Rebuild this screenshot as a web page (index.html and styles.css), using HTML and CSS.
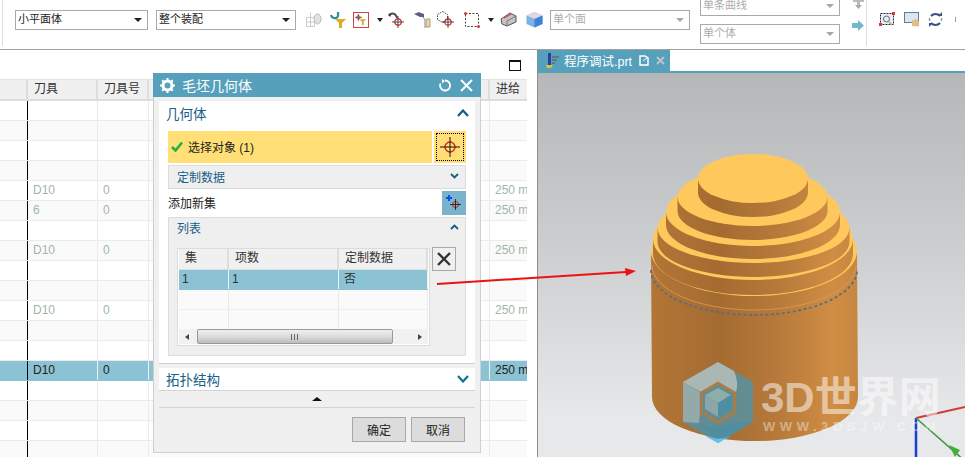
FILE: index.html
```html
<!DOCTYPE html>
<html lang="zh">
<head>
<meta charset="utf-8">
<title>毛坯几何体</title>
<link rel="stylesheet" href="styles.css">
</head>
<body>
<div class="app">
  <header class="toolbar">
    <div class="tb-sep first"></div>
    <div class="combo c1"><span>小平面体</span><i class="caret"></i></div>
    <div class="combo c2"><span>整个装配</span><i class="caret"></i></div>
    <div class="tb-icons">
      <svg width="17" height="17" viewBox="0 0 17 17"><path d="M1.500 6.500h8v9h-8zM5.500 1.500v14M1.500 11h8" fill="none" stroke="#c8cccc"/><ellipse cx="12.500" cy="8" rx="3.500" ry="5" fill="#dfe3e6" stroke="#bbb"/></svg>
      <svg width="16" height="17" viewBox="0 0 16 17"><path d="M1 4c1 4 6 4 7 1V1" fill="none" stroke="#2d8f96" stroke-width="2.200"/><path d="M5 8h11l-4 4v5h-3v-5z" fill="#e0a92c"/></svg>
      <svg class="boxed" width="16" height="16" viewBox="0 0 16 16"><circle cx="5" cy="5" r="2" fill="none" stroke="#c33"/><path d="M5 1v8M1 5h8" stroke="#333" stroke-width=".8"/><path d="M6 7h8l-3 3v4h-2v-4z" fill="#e0a92c"/></svg>
      <i class="mini-caret"></i>
      <svg width="17" height="17" viewBox="0 0 17 17"><path d="M1 5c2-4 7-3 8 2" fill="none" stroke="#445" stroke-width="1.800"/><path d="M0 3l3-1 0 4z" fill="#445"/><circle cx="10" cy="11" r="3.200" fill="none" stroke="#d22" stroke-width="1.200"/><path d="M10 5v12M4 11h12" stroke="#222" stroke-width=".8"/></svg>
      <svg width="17" height="17" viewBox="0 0 17 17"><path d="M0 3l5-2 2 1 3 1v3H6z" fill="#5a6078"/><path d="M9 6l2 3v8" stroke="#7a8fb0" fill="none"/><path d="M12 8h4v8h-4z" fill="#e8d8a8" stroke="#b0a078"/></svg>
      <svg width="17" height="17" viewBox="0 0 17 17"><path d="M5.500 .5l5 3v5l-5 3-5-3v-5z" fill="none" stroke="#444" stroke-dasharray="1.500 1"/><circle cx="11" cy="11" r="3.200" fill="none" stroke="#d22" stroke-width="1.200"/><path d="M11 5v12M5 11h12" stroke="#222" stroke-width=".8"/></svg>
      <svg width="16" height="16" viewBox="0 0 16 16"><path d="M1.500 1.500h13v13h-13z" fill="none" stroke="#444" stroke-dasharray="2 1.500"/><circle cx="1.500" cy="1.500" r="1.500" fill="#d33"/><circle cx="14.500" cy="14.500" r="1.500" fill="#d33"/></svg>
      <i class="mini-caret"></i>
      <svg width="17" height="15" viewBox="0 0 17 15"><path d="M1 7l9-6 6 3v6l-9 4-5-2z" fill="#c4c4c4" stroke="#555"/><path d="M4 6l7-4" stroke="#d55" stroke-width="1.500"/><path d="M7 14V9l9-5" fill="none" stroke="#777"/></svg>
      <svg width="17" height="17" viewBox="0 0 17 17"><path d="M8.500 1l8 3.500v8.500l-8 3.500-8-3.500V4.500z" fill="#79b4e4"/><path d="M.5 4.500L8.500 8l8-3.500-8-3.500z" fill="#e6d5e0"/><path d="M8.500 8v8.500l8-3.500V4.500z" fill="#3d82dc"/></svg>
    </div>
    <div class="combo off c3"><span>单个面</span><i class="caret"></i></div>
    <div class="stack">
      <div class="combo off c4"><span>单条曲线</span><i class="caret"></i></div>
      <div class="combo off c4"><span>单个体</span><i class="caret"></i></div>
    </div>
    <div class="arrows">
      <svg width="13" height="10" viewBox="0 0 13 10"><path d="M1 0h11v2H1zM5 0h3v6H5z" fill="#bbb"/><path d="M3 5h7l-3.500 4z" fill="#aaa"/></svg>
      <svg width="12" height="11" viewBox="0 0 12 11"><path d="M0 3h6V0l6 5.500L6 11V8H0z" fill="#6fb9cf"/></svg>
    </div>
    <div class="tb-sep"></div>
    <div class="tb-icons right">
      <svg width="16" height="15" viewBox="0 0 16 15"><rect x="1.500" y="1.500" width="13" height="11" fill="#e6eef6" stroke="#224" stroke-dasharray="2 1"/><circle cx="7.500" cy="7" r="3" fill="none" stroke="#667"/><path d="M13 0h3v3h-3zM0 11h3v3H0z" fill="#d33"/><path d="M10 10l3 3" stroke="#c8a860" stroke-width="1.500"/></svg>
      <svg width="16" height="15" viewBox="0 0 16 15"><rect x=".5" y=".5" width="14" height="10" fill="#dbe6f0" stroke="#6a7a90"/><path d="M8 14V8l2 .5 1-2 4 3v5z" fill="#e2bb85"/></svg>
      <svg width="15" height="15" viewBox="0 0 15 15"><path d="M3 4a6 6 0 0 1 9 0M12 11a6 6 0 0 1-9 0" fill="none" stroke="#36527e" stroke-width="2"/><path d="M10 4h4V0zM5 11H1v4z" fill="#36527e"/><path d="M1.500 6v3M13.500 6v3" stroke="#8aa0c0" stroke-width="1.500"/></svg>
      <i class="edge-mark"></i>
    </div>
  </header>

  <main class="workspace">
    <section class="left-pane">
      <div class="pane-top"><i class="maximize"></i></div>
      <div class="table">
        <div class="row head"><div class="c a"></div><div class="c b">刀具</div><div class="c d">刀具号</div><div class="c e"></div><div class="c f">进给</div></div>
        <div class="row"><div class="c a"></div><div class="c b"></div><div class="c d"></div><div class="c e"></div><div class="c f"></div></div>
        <div class="row"><div class="c a"></div><div class="c b"></div><div class="c d"></div><div class="c e"></div><div class="c f"></div></div>
        <div class="row"><div class="c a"></div><div class="c b"></div><div class="c d"></div><div class="c e"></div><div class="c f"></div></div>
        <div class="row"><div class="c a"></div><div class="c b"></div><div class="c d"></div><div class="c e"></div><div class="c f"></div></div>
        <div class="row dim"><div class="c a"></div><div class="c b">D10</div><div class="c d">0</div><div class="c e"></div><div class="c f">250 mm</div></div>
        <div class="row dim"><div class="c a"></div><div class="c b">6</div><div class="c d">0</div><div class="c e"></div><div class="c f">250 mm</div></div>
        <div class="row"><div class="c a"></div><div class="c b"></div><div class="c d"></div><div class="c e"></div><div class="c f"></div></div>
        <div class="row dim"><div class="c a"></div><div class="c b">D10</div><div class="c d">0</div><div class="c e"></div><div class="c f">250 mm</div></div>
        <div class="row"><div class="c a"></div><div class="c b"></div><div class="c d"></div><div class="c e"></div><div class="c f"></div></div>
        <div class="row"><div class="c a"></div><div class="c b"></div><div class="c d"></div><div class="c e"></div><div class="c f"></div></div>
        <div class="row dim"><div class="c a"></div><div class="c b">D10</div><div class="c d">0</div><div class="c e"></div><div class="c f">250 mm</div></div>
        <div class="row"><div class="c a"></div><div class="c b"></div><div class="c d"></div><div class="c e"></div><div class="c f"></div></div>
        <div class="row"><div class="c a"></div><div class="c b"></div><div class="c d"></div><div class="c e"></div><div class="c f"></div></div>
        <div class="row sel"><div class="c a"></div><div class="c b">D10</div><div class="c d">0</div><div class="c e"></div><div class="c f">250 mm</div></div>
        <div class="row"><div class="c a"></div><div class="c b"></div><div class="c d"></div><div class="c e"></div><div class="c f"></div></div>
        <div class="row"><div class="c a"></div><div class="c b"></div><div class="c d"></div><div class="c e"></div><div class="c f"></div></div>
        <div class="row"><div class="c a"></div><div class="c b"></div><div class="c d"></div><div class="c e"></div><div class="c f"></div></div>
        <div class="row"><div class="c a"></div><div class="c b"></div><div class="c d"></div><div class="c e"></div><div class="c f"></div></div>
      </div>
    </section>

    <section class="view-pane">
      <div class="tabbar">
        <div class="tab">
          <svg width="14" height="16" viewBox="0 0 14 16"><path d="M3 0h3v12H3z" fill="#2c3f9c"/><path d="M7 4h7M7 7h5M7 10h3" stroke="#555" stroke-width="1"/><path d="M1 12h7l-2 3H2z" fill="#d8c23a"/></svg>
          <span class="tab-name">程序调试.prt</span>
          <svg class="tab-edit" width="10" height="11" viewBox="0 0 10 11"><path d="M1 1h5l3 2v7H1z" fill="none" stroke="#fff" stroke-width="1.500"/><path d="M4 6l5-4" stroke="#fff"/></svg>
          <svg width="9" height="9" viewBox="0 0 9 9"><path d="M1 1l7 7M8 1L1 8" stroke="#b8c4ca" stroke-width="2"/></svg>
        </div>
      </div>
      <div class="viewport">
        <svg class="model" width="427" height="384" viewBox="538 73 427 384">
          <defs>
            <linearGradient id="wall" gradientUnits="userSpaceOnUse" x1="651" y1="0" x2="858" y2="0">
              <stop offset="0" stop-color="#b27636"/>
              <stop offset=".33" stop-color="#a46b31"/>
              <stop offset=".6" stop-color="#b6793a"/>
              <stop offset=".88" stop-color="#d08d44"/>
              <stop offset="1" stop-color="#c68640"/>
            </linearGradient>
          </defs>
          <path d="M651 251 L652 397 A103 44 0 0 0 858 397 L857 251 Z" fill="url(#wall)"/>
          <path d="M652 265 A102 45 0 0 0 856 265" fill="none" stroke="#df9c4e" stroke-width=".8"/>
          <path d="M651 270 A103 45 0 0 0 857 270" fill="none" stroke="#5d6c7e" stroke-width="1.800" stroke-dasharray="3 2.500"/>
          <ellipse cx="754" cy="251" rx="103" ry="45" fill="#ffc85c"/>
          <path d="M653 239 v15 a100 41 0 0 0 200 0 v-15 z" fill="url(#wall)"/>
          <ellipse cx="753" cy="239" rx="100" ry="41" fill="#ffc85c"/>
          <path d="M657.500 228 v14 a96 35 0 0 0 192 0 v-14 z" fill="url(#wall)"/>
          <ellipse cx="753.500" cy="228" rx="96" ry="35" fill="#ffc85c"/>
          <path d="M666 212 v13 a87 34 0 0 0 174 0 v-13 z" fill="url(#wall)"/>
          <ellipse cx="753" cy="212" rx="87" ry="34" fill="#ffc85c"/>
          <path d="M677.500 197 v14 a75 29 0 0 0 150 0 v-14 z" fill="url(#wall)"/>
          <ellipse cx="752.500" cy="197" rx="75" ry="29" fill="#ffc85c"/>
          <path d="M698 178.500 v14 a55 24.500 0 0 0 110 0 v-14 z" fill="url(#wall)"/>
          <ellipse cx="753" cy="178.500" rx="55" ry="24.500" fill="#ffc85c"/>

          <g class="axes">
            <path d="M916 418 L965 407" stroke="#cf3b3b" stroke-width="2"/>
            <path d="M916 418 V457" stroke="#1a3fd0" stroke-width="2.500"/>
            <path d="M916 418 L965 461" stroke="#3f9a3f" stroke-width="1.600"/>
            <path d="M949 445 L960 450 L955 457 Z" fill="#3fae3f"/>
          </g>

          <g class="logo">
            <path d="M718 362 L753 382 V422 L718 443 L683 422 V382 Z" fill="#4f95ad" opacity=".78"/>
            <path d="M718 362 L734 371 Q739 382 736 392 L718 382 L701 392 L683 382 Z" fill="#d8d6cc" opacity=".6"/>
            <path d="M683 382 L700 392 V412 L699 423 L683 422 Z" fill="#c4c8c2" opacity=".5"/>
            <path d="M699 423 Q715 431 735 422 L753 422 L718 443 Z" fill="#3f90ac" opacity=".55"/>
            <path d="M718 443 L705 436 Q718 442 731 436 Z" fill="#62c4f0"/>
            <path d="M718 383 L735 393 V412 L718 422 L701 412 V393 Z" fill="none" stroke="#b47a3c" stroke-width="2.500"/>
            <path d="M718 388 L731 395 L718 403 L705 395 Z" fill="#8fadab"/>
            <path d="M705 395 L718 403 V417 L705 409 Z" fill="#8ba6a6"/>
            <path d="M731 395 L718 403 V417 L731 409 Z" fill="#4f8ea2"/>
            <text class="wm-big" x="761" y="412">3D世界网</text>
            <text class="wm-small" x="763" y="431">WWW.3DSJW.COM</text>
          </g>
        </svg>
      </div>
    </section>
  </main>

  <aside class="dialog">
    <div class="dlg-title">
      <svg width="15" height="15" viewBox="0 0 15 15"><circle cx="7.500" cy="7.500" r="4.500" fill="none" stroke="#fff" stroke-width="3"/><path d="M7.500 0v3M7.500 12v3M0 7.500h3M12 7.500h3M2.200 2.200l2 2M10.800 10.800l2 2M12.800 2.200l-2 2M4.200 10.800l-2 2" stroke="#fff" stroke-width="2"/></svg>
      <span class="dlg-name">毛坯几何体</span>
      <svg class="reset" width="13" height="13" viewBox="0 0 13 13"><path d="M6 1.500a5 5 0 1 1-4.500 3" fill="none" stroke="#fff" stroke-width="1.800"/><path d="M3 0l3 2-3 2.500z" fill="#fff"/></svg>
      <svg width="13" height="13" viewBox="0 0 13 13"><path d="M1 1l11 11M12 1L1 12" stroke="#fff" stroke-width="2"/></svg>
    </div>
    <div class="dlg-body">
      <div class="panel">
        <div class="sec-head"><span>几何体</span><svg class="chev" width="12" height="8" viewBox="0 0 12 8"><path d="M1 7l5-5.500L11 7" fill="none" stroke="#0f5f80" stroke-width="2.200"/></svg></div>
        <div class="pick-row">
          <div class="pick-label">
            <svg width="12" height="11" viewBox="0 0 12 11"><path d="M1 6l3.500 3.500L11 1.500" fill="none" stroke="#1fb43a" stroke-width="2.600"/></svg>
            <span>选择对象 (1)</span>
          </div>
          <div class="pick-btn"><div class="focus">
            <svg width="20" height="20" viewBox="0 0 20 20"><circle cx="10" cy="10" r="5" fill="none" stroke="#e01b1b" stroke-width="1.300"/><path d="M10 0v20M0 10h20" stroke="#111" stroke-width="1"/></svg>
          </div></div>
        </div>
        <div class="sub-head"><span>定制数据</span><svg width="9" height="6" viewBox="0 0 9 6"><path d="M1 1l3.500 3.500L8 1" fill="none" stroke="#0f5f80" stroke-width="1.800"/></svg></div>
        <div class="add-row">
          <span>添加新集</span>
          <div class="add-btn"><svg width="16" height="16" viewBox="0 0 16 16"><path d="M3 0v6M0 3h6" stroke="#0a54e8" stroke-width="2"/><circle cx="9.500" cy="9.500" r="3" fill="none" stroke="#d01818"/><path d="M9.500 4v11M4 9.500h11" stroke="#111" stroke-width=".8"/></svg></div>
        </div>
        <div class="list-box">
          <div class="sub-head inner"><span>列表</span><svg width="9" height="6" viewBox="0 0 9 6"><path d="M1 5l3.500-3.500L8 5" fill="none" stroke="#0f5f80" stroke-width="1.800"/></svg></div>
          <div class="list-body">
            <div class="grid">
              <div class="g-row g-head"><div>集</div><div>项数</div><div>定制数据</div></div>
              <div class="g-row g-sel"><div>1</div><div>1</div><div>否</div></div>
              <div class="g-row"><div></div><div></div><div></div></div>
              <div class="g-row g-last"><div></div><div></div><div></div></div>
              <div class="hscroll">
                <i class="arr l"></i>
                <div class="thumb"><b></b></div>
                <i class="arr r"></i>
              </div>
            </div>
            <div class="del"><svg width="14" height="14" viewBox="0 0 14 14"><path d="M1 1l12 12M13 1L1 13" stroke="#333" stroke-width="2.400"/></svg></div>
          </div>
        </div>
      </div>
      <div class="panel topo">
        <div class="sec-head"><span>拓扑结构</span><svg class="chev" width="12" height="8" viewBox="0 0 12 8"><path d="M1 1l5 5.500L11 1" fill="none" stroke="#0f7098" stroke-width="2.200"/></svg></div>
      </div>
      <div class="more"><i></i></div>
      <div class="actions"><button class="btn">确定</button><button class="btn">取消</button></div>
    </div>
  </aside>

  <svg class="red-arrow" width="205" height="24" viewBox="435 266 205 24"><path d="M437 284 L626 272" stroke="#ee1111" stroke-width="2"/><path d="M625 268 L636 271 L626 276 Z" fill="#ee1111"/></svg>
</div>
</body>
</html>
```
FILE: styles.css
```css
* { box-sizing: border-box; }
html, body { margin: 0; height: 100%; overflow: hidden; }
body { font: 12px "Liberation Sans", "Noto Sans CJK SC", sans-serif; color: #333; background: #fff; }
.app { position: relative; width: 965px; height: 457px; display: flex; flex-direction: column; overflow: hidden; }

/* toolbar */
.toolbar { height: 50px; flex: none; display: flex; align-items: flex-start; border-bottom: 1px solid #a0a0a0; background: #fff; padding-left: 2px; overflow: hidden; font-size: 11px; }
.tb-sep { width: 1px; height: 46px; background: #ddd; flex: none; }
.combo { height: 20px; border: 1px solid #a9a9a9; display: flex; align-items: center; justify-content: space-between; padding: 0 5px 0 2px; color: #222; background: #fff; flex: none; }
.combo span { line-height: 17px; padding-bottom: 1px; }
.caret { width: 0; height: 0; border-style: solid; border-color: #222 transparent transparent; border-width: 4px 4px 0; }
.c1 { width: 133px; margin: 10px 0 0 12px; }
.c2 { width: 140px; margin: 10px 0 0 8px; }
.c3 { width: 140px; margin: 10px 0 0 0; }
.c4 { width: 140px; }
.off { color: #adadad; }
.off .caret { border-top-color: #a8a8a8; }
.stack { display: flex; flex-direction: column; gap: 8px; margin: -4px 0 0 10px; flex: none; }
.tb-icons { display: grid; grid-template-columns: 25px 23px 24px 11px 26px 23px 27px 24px 12px 26px 24px; justify-items: start; align-items: center; margin: 11px 0 0 9px; width: 245px; flex: none; }
.tb-icons.right { grid-template-columns: 25px 24px 27px 1px; margin: 12px 0 0 12px; width: 77px; }
.boxed { border: 1px solid #c44; }
.mini-caret { width: 0; height: 0; border-style: solid; border-color: #222 transparent transparent; border-width: 4px 3px 0; }
.edge-mark { width: 1px; height: 5px; background: #8aa0d0; }
.arrows { display: flex; flex-direction: column; gap: 10px; margin: 0 0 0 12px; width: 14px; flex: none; }

/* workspace */
.workspace { flex: 1; display: flex; min-height: 0; }
.left-pane { width: 538px; flex: none; background: #fff; overflow: hidden; border-right: 1px solid #8a8f92; }
.pane-top { height: 29px; display: flex; justify-content: flex-end; align-items: flex-start; padding: 10px 16px 0 0; }
.maximize { width: 12px; height: 11px; border: 1px solid #111; border-top-width: 2px; display: block; }
.table { width: 527px; height: 378px; overflow: hidden; }
.row { height: 20px; display: grid; grid-template-columns: 28px 70px 51px 341px 37px; border-bottom: 1px solid #ebebeb; }
.row:nth-child(odd) { background: #fafafa; }
.row.head { height: 22px; background: #f0f0f0; border-top: 1px solid #e2e2e2; border-bottom: 2px solid #dcdcdc; color: #333; }
.c { padding-left: 5px; border-right: 1px solid #ebebeb; line-height: 19px; white-space: nowrap; overflow: hidden; }
.head .c { border-right: 2px solid #dcdcdc; padding-left: 6px; }
.c.a { border-right: 1px solid #000; padding: 0; }
.head .c.a { border-right: 2px solid #dcdcdc; padding: 0; }
.c.f { border-right: 0; }
.dim .c { color: #9fb7a8; }
.row.sel { background: #8cc3d4; border-bottom-color: #8cc3d4; }
.sel .c { color: #222; border-right-color: #e8f3f6; }
.sel .c.a { border-right-color: #000; }

/* viewport */
.view-pane { flex: 1; display: flex; flex-direction: column; min-width: 0; }
.tabbar { height: 23px; flex: none; border-bottom: 2px solid #56a0bb; background: #fff; }
.tab { width: 132px; height: 21px; background: #56a0bb; color: #fff; display: flex; align-items: center; padding-left: 7px; font-size: 12.500px; }
.tab-name { margin-left: 5px; width: 75px; padding-bottom: 1px; white-space: nowrap; }
.tab-edit { margin-right: 7px; }
.viewport { flex: 1; background: linear-gradient(#b6b7b9, #c6c8ca 35%, #e7e8ea 90%); overflow: hidden; }
.model { display: block; }
.wm-big { font: bold 42px "Liberation Sans", "Noto Sans CJK SC", sans-serif; fill: rgba(255,255,255,.5); }
.wm-small { font: bold 13px "Liberation Sans", sans-serif; letter-spacing: 4.600px; fill: rgba(255,255,255,.4); }

/* dialog */
.dialog { position: absolute; left: 153px; top: 73px; width: 328px; height: 380px; background: #f0f0f0; border: 1px solid #cfcfcf; border-top: 0; display: flex; flex-direction: column; }
.dlg-title { height: 24px; margin: 0 -1px; background: #56a0bb; color: #fff; display: flex; align-items: center; padding: 0 8px 0 7px; flex: none; }
.dlg-name { flex: 1; font-size: 14px; margin-left: 7px; }
.reset { margin-right: 8px; }
.dlg-body { flex: 1; padding: 4px 5px 0; display: flex; flex-direction: column; }
.panel { background: #fff; padding: 0 9px; }
.sec-head { height: 26px; display: flex; align-items: center; justify-content: space-between; color: #17608a; font-size: 13.500px; margin: 0 -9px; padding: 0 6px 2px 7px; }
.topo .sec-head { height: 22px; padding-bottom: 0; }
.pick-row { display: flex; gap: 2px; height: 32px; margin-top: 4px; }
.pick-label { flex: 1; background: #ffdf76; display: flex; align-items: center; gap: 5px; padding: 0 0 2px 3px; color: #222; }
.pick-btn { width: 32px; background: #ffdf76; padding: 2px; }
.focus { border: 1px dotted #000; height: 100%; display: flex; align-items: center; justify-content: center; }
.sub-head { height: 24px; margin-top: 2px; background: #efefef; border: 1px solid #dcdcdc; display: flex; align-items: center; justify-content: space-between; padding: 0 6px 2px 8px; color: #17608a; }
.sub-head.inner { margin: 0; border: 0; height: 22px; padding-bottom: 4px; }
.add-row { display: flex; justify-content: space-between; align-items: center; height: 24px; margin-top: 2px; color: #222; }
.add-row span { padding-bottom: 2px; }
.add-btn { width: 24px; height: 24px; background: #7ab4cc; display: flex; align-items: center; justify-content: center; }
.list-box { margin-top: 2px; height: 139px; background: #efefef; border: 1px solid #dcdcdc; }
.list-body { display: flex; align-items: flex-start; padding: 8px 0 0 8px; gap: 2px; }
.grid { width: 253px; height: 98px; border: 1px solid #dcdcdc; background: #fff; padding: 0 1px; }
.g-row { display: grid; grid-template-columns: 50px 110px 1fr; height: 20px; background: #fafafa; border-bottom: 1px solid #eee; color: #333; }
.g-row > div { padding-left: 6px; line-height: 19px; border-right: 1px solid #eaeaea; }
.g-head { height: 21px; background: #f0f0f0; border-bottom: 1px solid #ddd; }
.g-head > div { border-right: 2px solid #ddd; }
.g-sel { background: #8cc3d4; border-bottom-color: #8cc3d4; }
.g-sel > div { padding-left: 3px; border-right-color: #e8f3f6; }
.g-sel > div:last-child { padding-left: 5px; }
.g-last { height: 19px; border-bottom: 0; }
.hscroll { height: 15px; background: #f1f1f1; display: flex; align-items: center; padding: 0 6px 0 6px; }
.thumb { width: 196px; height: 15px; margin: 0 auto 0 8px; background: linear-gradient(#efefef, #dcdcdc 50%, #bcbcbc); border: 1px solid #999; border-radius: 2px; display: flex; align-items: center; justify-content: center; }
.thumb b { width: 8px; height: 6px; background: repeating-linear-gradient(90deg, #666 0 1px, transparent 1px 3px); }
.arr { width: 0; height: 0; border-style: solid; border-color: transparent; border-width: 3px 0; }
.arr.l { border-width: 3px 4px 3px 0; border-right-color: #444; }
.arr.r { border-width: 3px 0 3px 4px; border-left-color: #444; }
.del { width: 24px; height: 24px; margin-top: -1px; background: #efefef; border: 1px solid #a8a8a8; display: flex; align-items: center; justify-content: center; }
.panel:first-child { border-bottom: 1px solid #d0d0d0; padding-bottom: 7px; }
.panel.topo { margin-top: 4px; border-bottom: 1px solid #d4d4d4; }
.more { height: 17px; border-bottom: 1px solid #d4d4d4; display: flex; align-items: center; justify-content: center; }
.more i { width: 0; height: 0; border-style: solid; border-color: transparent transparent #111; border-width: 0 5px 4px; }
.actions { display: flex; justify-content: flex-end; gap: 5px; padding: 9px 10px 0 0; }
.btn { width: 54px; height: 25px; padding: 0; background: #dcdcdc; border: 1px solid #a8a8a8; font: 12px "Liberation Sans", "Noto Sans CJK SC", sans-serif; color: #222; }

.red-arrow { position: absolute; left: 435px; top: 266px; }
```
